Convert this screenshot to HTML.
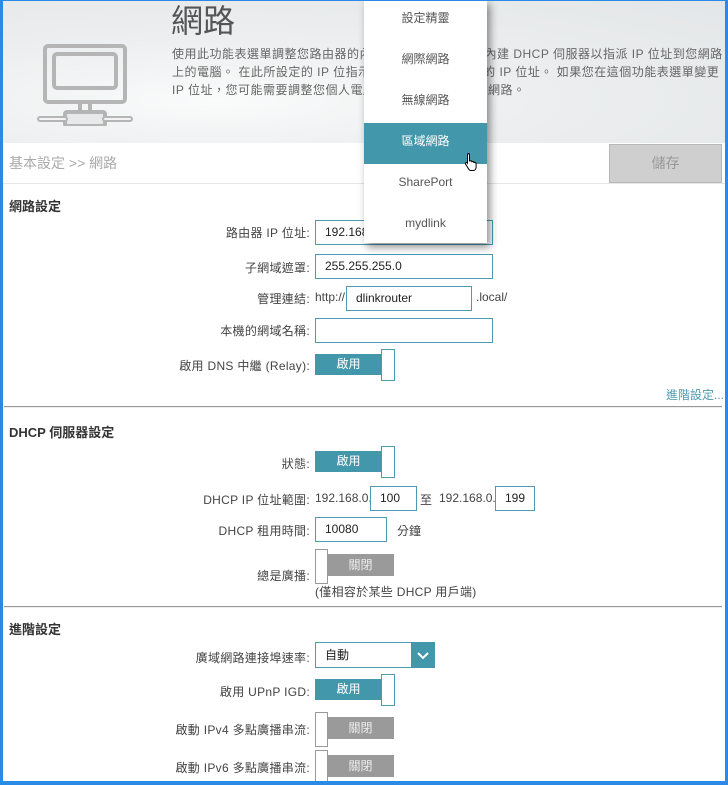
<!DOCTYPE html>
<html><head><meta charset="utf-8"><style>
*{margin:0;padding:0;box-sizing:border-box}
body{width:728px;height:785px;overflow:hidden;background:#fff;position:relative;font-family:"Liberation Sans","Noto Sans CJK TC",sans-serif;font-size:12px;color:#444}
.a{position:absolute;white-space:nowrap}
.frame{position:absolute;left:0;top:0;width:728px;height:785px;border:3px solid #2b8ae6;border-top-width:1px;border-bottom-width:4px;z-index:50;pointer-events:none}
.hdr{position:absolute;left:0;top:0;width:728px;height:143px;background:radial-gradient(ellipse at 30% 70%,#fafbfb 0%,#eceeef 45%,#e3e6e8 100%)}
.lbl{position:absolute;right:418px;text-align:right;font-size:12px;color:#444;letter-spacing:0.3px}
.inp{position:absolute;border:1px solid #4a9bb0;background:#fff;font-size:12px;color:#222;padding-left:9px;line-height:23px;height:25px}
.on{position:absolute;width:80px;height:32px}
.on .b{position:absolute;left:0;top:5px;width:67px;height:21px;background:#4397aa;color:#fff;text-align:center;line-height:21px;font-size:12px}
.on .k{position:absolute;left:66px;top:0;width:14px;height:32px;border:1px solid #4a9bb0;background:#fff}
.off{position:absolute;width:80px;height:35px}
.off .b{position:absolute;left:12px;top:5px;width:67px;height:22px;background:#9a9a9a;color:#eee;text-align:center;line-height:22px;font-size:12px}
.off .k{position:absolute;left:0;top:0;width:13px;height:35px;border:1px solid #999;background:#fff}
.sec{position:absolute;left:9px;font-weight:bold;font-size:13px;color:#333}
.hr{position:absolute;left:4px;width:718px;height:2px;background:#999;border-bottom:1px solid #eee}
.menu{position:absolute;left:364px;top:0;width:123px;height:243px;background:#fff;box-shadow:3px 4px 8px rgba(0,0,0,.45);z-index:10}
.mi{height:41px;line-height:36px;text-align:center;font-size:12px;color:#555}
.mi.s{background:#4397aa;color:#fff}
</style></head><body>
<div class="hdr"></div>
<svg class="a" style="left:34px;top:44px" width="102" height="82" viewBox="0 0 102 82" fill="none" stroke="#b5b5b5" stroke-width="4">
<rect x="11" y="2" width="80" height="56" rx="3"/><rect x="20" y="10" width="62" height="34" rx="3"/>
<path d="M46 58v16M56 58v16"/><rect x="31" y="68" width="40" height="14" rx="2" fill="#e8e9ea"/>
<path d="M31 75H6M71 75h25" stroke-linecap="round" stroke-width="6"/><path d="M31 75H6M71 75h25" stroke="#f4f4f4" stroke-linecap="round" stroke-width="2"/>
</svg>
<div class="a" style="left:171px;top:-4px;font-size:32px;color:#555">網路</div>
<div class="a" style="left:172px;top:45px;font-size:12px;color:#666;line-height:18px;letter-spacing:0.5px">使用此功能表選單調整您路由器的內部網路設定以及設定內建 DHCP 伺服器以指派 IP 位址到您網路<br>上的電腦。 在此所設定的 IP 位指示您在此所設定的裡面的 IP 位址。 如果您在這個功能表選單變更<br>IP 位址，您可能需要調整您個人電腦的網路設定來存取此網路。</div>
<div class="a" style="left:0;top:143px;width:728px;height:41px;border-bottom:1px solid #e6e6e6;background:#fff"></div>
<div class="a" style="left:9px;top:153px;font-size:14px;color:#aaa">基本設定 &gt;&gt; 網路</div>
<div class="a" style="left:609px;top:144px;width:113px;height:39px;background:#cfcfcf;border:1px solid #b8b8b8;color:#999;font-size:14px;text-align:center;line-height:37px">儲存</div>

<div class="sec" style="top:196px">網路設定</div>
<div class="lbl" style="top:224px">路由器 IP 位址:</div><div class="inp" style="left:315px;top:220px;width:178px">192.168.0.1</div>
<div class="lbl" style="top:259px">子網域遮罩:</div><div class="inp" style="left:315px;top:254px;width:178px">255.255.255.0</div>
<div class="lbl" style="top:290px">管理連結:</div><div class="a" style="left:315px;top:290px">http://</div><div class="inp" style="left:346px;top:286px;width:126px">dlinkrouter</div><div class="a" style="left:476px;top:290px">.local/</div>
<div class="lbl" style="top:322px">本機的網域名稱:</div><div class="inp" style="left:315px;top:318px;width:178px"></div>
<div class="lbl" style="top:357px">啟用 DNS 中繼 (Relay):</div><div class="on" style="left:315px;top:349px"><div class="b">啟用</div><div class="k"></div></div>
<div class="a" style="left:666px;top:386px;color:#4a9bb0;font-size:12px">進階設定...</div>
<div class="hr" style="top:406px"></div>

<div class="sec" style="top:422px">DHCP 伺服器設定</div>
<div class="lbl" style="top:455px">狀態:</div><div class="on" style="left:315px;top:446px"><div class="b">啟用</div><div class="k"></div></div>
<div class="lbl" style="top:491px">DHCP IP 位址範圍:</div><div class="a" style="left:315px;top:491px">192.168.0.</div><div class="inp" style="left:370px;top:486px;width:47px">100</div><div class="a" style="left:420px;top:491px">至</div><div class="a" style="left:439px;top:491px">192.168.0.</div><div class="inp" style="left:495px;top:486px;width:40px">199</div>
<div class="lbl" style="top:522px">DHCP 租用時間:</div><div class="inp" style="left:315px;top:517px;width:72px">10080</div><div class="a" style="left:397px;top:522px">分鐘</div>
<div class="lbl" style="top:567px">總是廣播:</div><div class="off" style="left:315px;top:549px"><div class="b">關閉</div><div class="k"></div></div>
<div class="a" style="left:315px;top:583px;letter-spacing:0.3px">(僅相容於某些 DHCP 用戶端)</div>
<div class="hr" style="top:606px"></div>

<div class="sec" style="top:619px">進階設定</div>
<div class="lbl" style="top:649px">廣域網路連接埠速率:</div><div class="inp" style="left:315px;top:642px;width:120px;height:26px;line-height:24px">自動</div>
<div class="a" style="left:411px;top:642px;width:24px;height:26px;background:#4397aa"><svg width="24" height="26"><path d="M7 11l5 5 5-5" stroke="#fff" stroke-width="2" fill="none"/></svg></div>
<div class="lbl" style="top:683px">啟用 UPnP IGD:</div><div class="on" style="left:315px;top:674px"><div class="b">啟用</div><div class="k"></div></div>
<div class="lbl" style="top:721px">啟動 IPv4 多點廣播串流:</div><div class="off" style="left:315px;top:712px"><div class="b">關閉</div><div class="k"></div></div>
<div class="lbl" style="top:759px">啟動 IPv6 多點廣播串流:</div><div class="off" style="left:315px;top:750px"><div class="b">關閉</div><div class="k"></div></div>

<div class="menu">
<div class="mi">設定精靈</div><div class="mi">網際網路</div><div class="mi">無線網路</div><div class="mi s">區域網路</div><div class="mi">SharePort</div><div class="mi">mydlink</div>
</div>
<svg class="a" style="left:464px;top:152px;z-index:11" width="16" height="20" viewBox="0 0 16 20"><path d="M4 1.5c1 0 1.5.6 1.5 1.5v6l1-.3c.8 0 1.3.5 1.3 1l.9-.2c.7 0 1.2.5 1.200 1l.9-.1c.8 0 1.3.6 1.3 1.3v3.5c0 1.8-1.2 3.3-3 3.3H7c-1 0-1.8-.6-2.3-1.4L1.5 12c-.4-.7 0-1.5.8-1.5.5 0 .9.3 1.2.7V3c0-.9.5-1.5 1.5-1.5z" fill="#fff" stroke="#000" stroke-width="1"/></svg>
<div class="frame"></div>
</body></html>
